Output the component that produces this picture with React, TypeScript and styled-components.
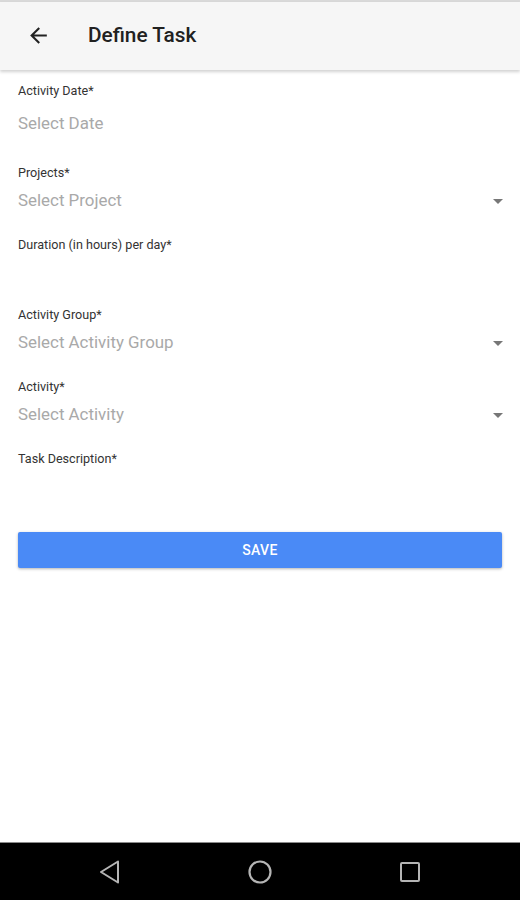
import styled, { createGlobalStyle } from 'styled-components';

const GlobalStyle = createGlobalStyle`
  body {
    margin: 0;
    font-family: Roboto, "Noto Sans", "Liberation Sans", sans-serif;
    background: #fff;
  }
`

const Screen = styled.div`
  width: 520px;
  height: 900px;
  display: flex;
  flex-direction: column;
  overflow: hidden;
`

const TopEdge = styled.div`
  height: 2px;
  background: #d9d9d9;
`

const Header = styled.header`
  height: 68px;
  background: #f6f6f6;
  display: flex;
  align-items: center;
  padding: 0 0 2px 26px;
  box-sizing: border-box;
  box-shadow: 0 2px 3px rgba(0, 0, 0, 0.18);
  position: relative;
  z-index: 1;
`

const BackButton = styled.div`
  width: 25px;
  height: 25px;
  display: flex;
  color: #222;
`

const Title = styled.div`
  margin-left: 37px;
  font-size: 20.8px;
  font-weight: 500;
  color: #212121;
`

const Form = styled.div`
  flex: 1;
  padding: 13px 18px 0;
`

const Field = styled.div`
  margin-bottom: 18px;
`

const Label = styled.div`
  font-size: 12.6px;
  line-height: 16px;
  color: #333;
`

const ValueRow = styled.div<{ $height: number }>`
  height: ${p => p.$height}px;
  display: flex;
  align-items: center;
  justify-content: space-between;
`

const Placeholder = styled.div`
  font-size: 16.9px;
  color: #a9a9a9;
`

const Caret = styled.div`
  width: 0;
  height: 0;
  margin: 3px -1px 0 0;
  border-left: 5px solid transparent;
  border-right: 5px solid transparent;
  border-top: 5px solid #777;
`

const SaveButton = styled.button`
  width: 100%;
  height: 36px;
  margin-top: 1px;
  border: none;
  border-radius: 2px;
  background: #4a8af6;
  color: #fff;
  font-family: inherit;
  font-size: 14px;
  font-weight: 500;
  letter-spacing: 0.3px;
  box-shadow: 0 1px 3px rgba(0, 0, 0, 0.3);
`

const NavBar = styled.div`
  height: 58px;
  background: #000;
  border-top: 1px solid #8a8a8a;
  display: grid;
  grid-template-columns: repeat(3, 150px);
  align-items: center;
  justify-items: center;
  padding: 0 35px;
  box-sizing: border-box;
`

interface FieldProps {
  label: string;
  placeholder?: string;
  height: number;
  dropdown?: boolean;
}

function FormField(props: FieldProps) {
  return <Field>
    <Label>{props.label}</Label>
    <ValueRow $height={props.height}>
      {props.placeholder && <Placeholder>{props.placeholder}</Placeholder>}
      {props.dropdown && <Caret />}
    </ValueRow>
  </Field>;
}

export default function App() {
  return <>
    <GlobalStyle />
    <Screen>
      <TopEdge />
      <Header>
        <BackButton>
          <svg width="25" height="25" viewBox="0 0 24 24" fill="currentColor">
            <path d="M20 11H7.83l5.59-5.59L12 4l-8 8 8 8 1.41-1.41L7.83 13H20v-2z" />
          </svg>
        </BackButton>
        <Title>Define Task</Title>
      </Header>
      <Form>
        <FormField label="Activity Date*" placeholder="Select Date" height={48} />
        <FormField label="Projects*" placeholder="Select Project" height={38} dropdown />
        <FormField label="Duration (in hours) per day*" height={36} />
        <FormField label="Activity Group*" placeholder="Select Activity Group" height={38} dropdown />
        <FormField label="Activity*" placeholder="Select Activity" height={38} dropdown />
        <FormField label="Task Description*" height={46} />
        <SaveButton>SAVE</SaveButton>
      </Form>
      <NavBar>
        <svg width="24" height="24" viewBox="0 0 24 24" fill="none" stroke="#b5b5b5" strokeWidth="2" strokeLinejoin="round">
          <path d="M20 1.5 L3 12 L20 22.5 Z" />
        </svg>
        <svg width="26" height="26" viewBox="0 0 26 26" fill="none" stroke="#b5b5b5" strokeWidth="2.2">
          <circle cx="13" cy="13" r="10.5" />
        </svg>
        <svg width="22" height="22" viewBox="0 0 22 22" fill="none" stroke="#b5b5b5" strokeWidth="2">
          <rect x="2" y="2" width="18" height="18" rx="1" />
        </svg>
      </NavBar>
    </Screen>
  </>;
}
